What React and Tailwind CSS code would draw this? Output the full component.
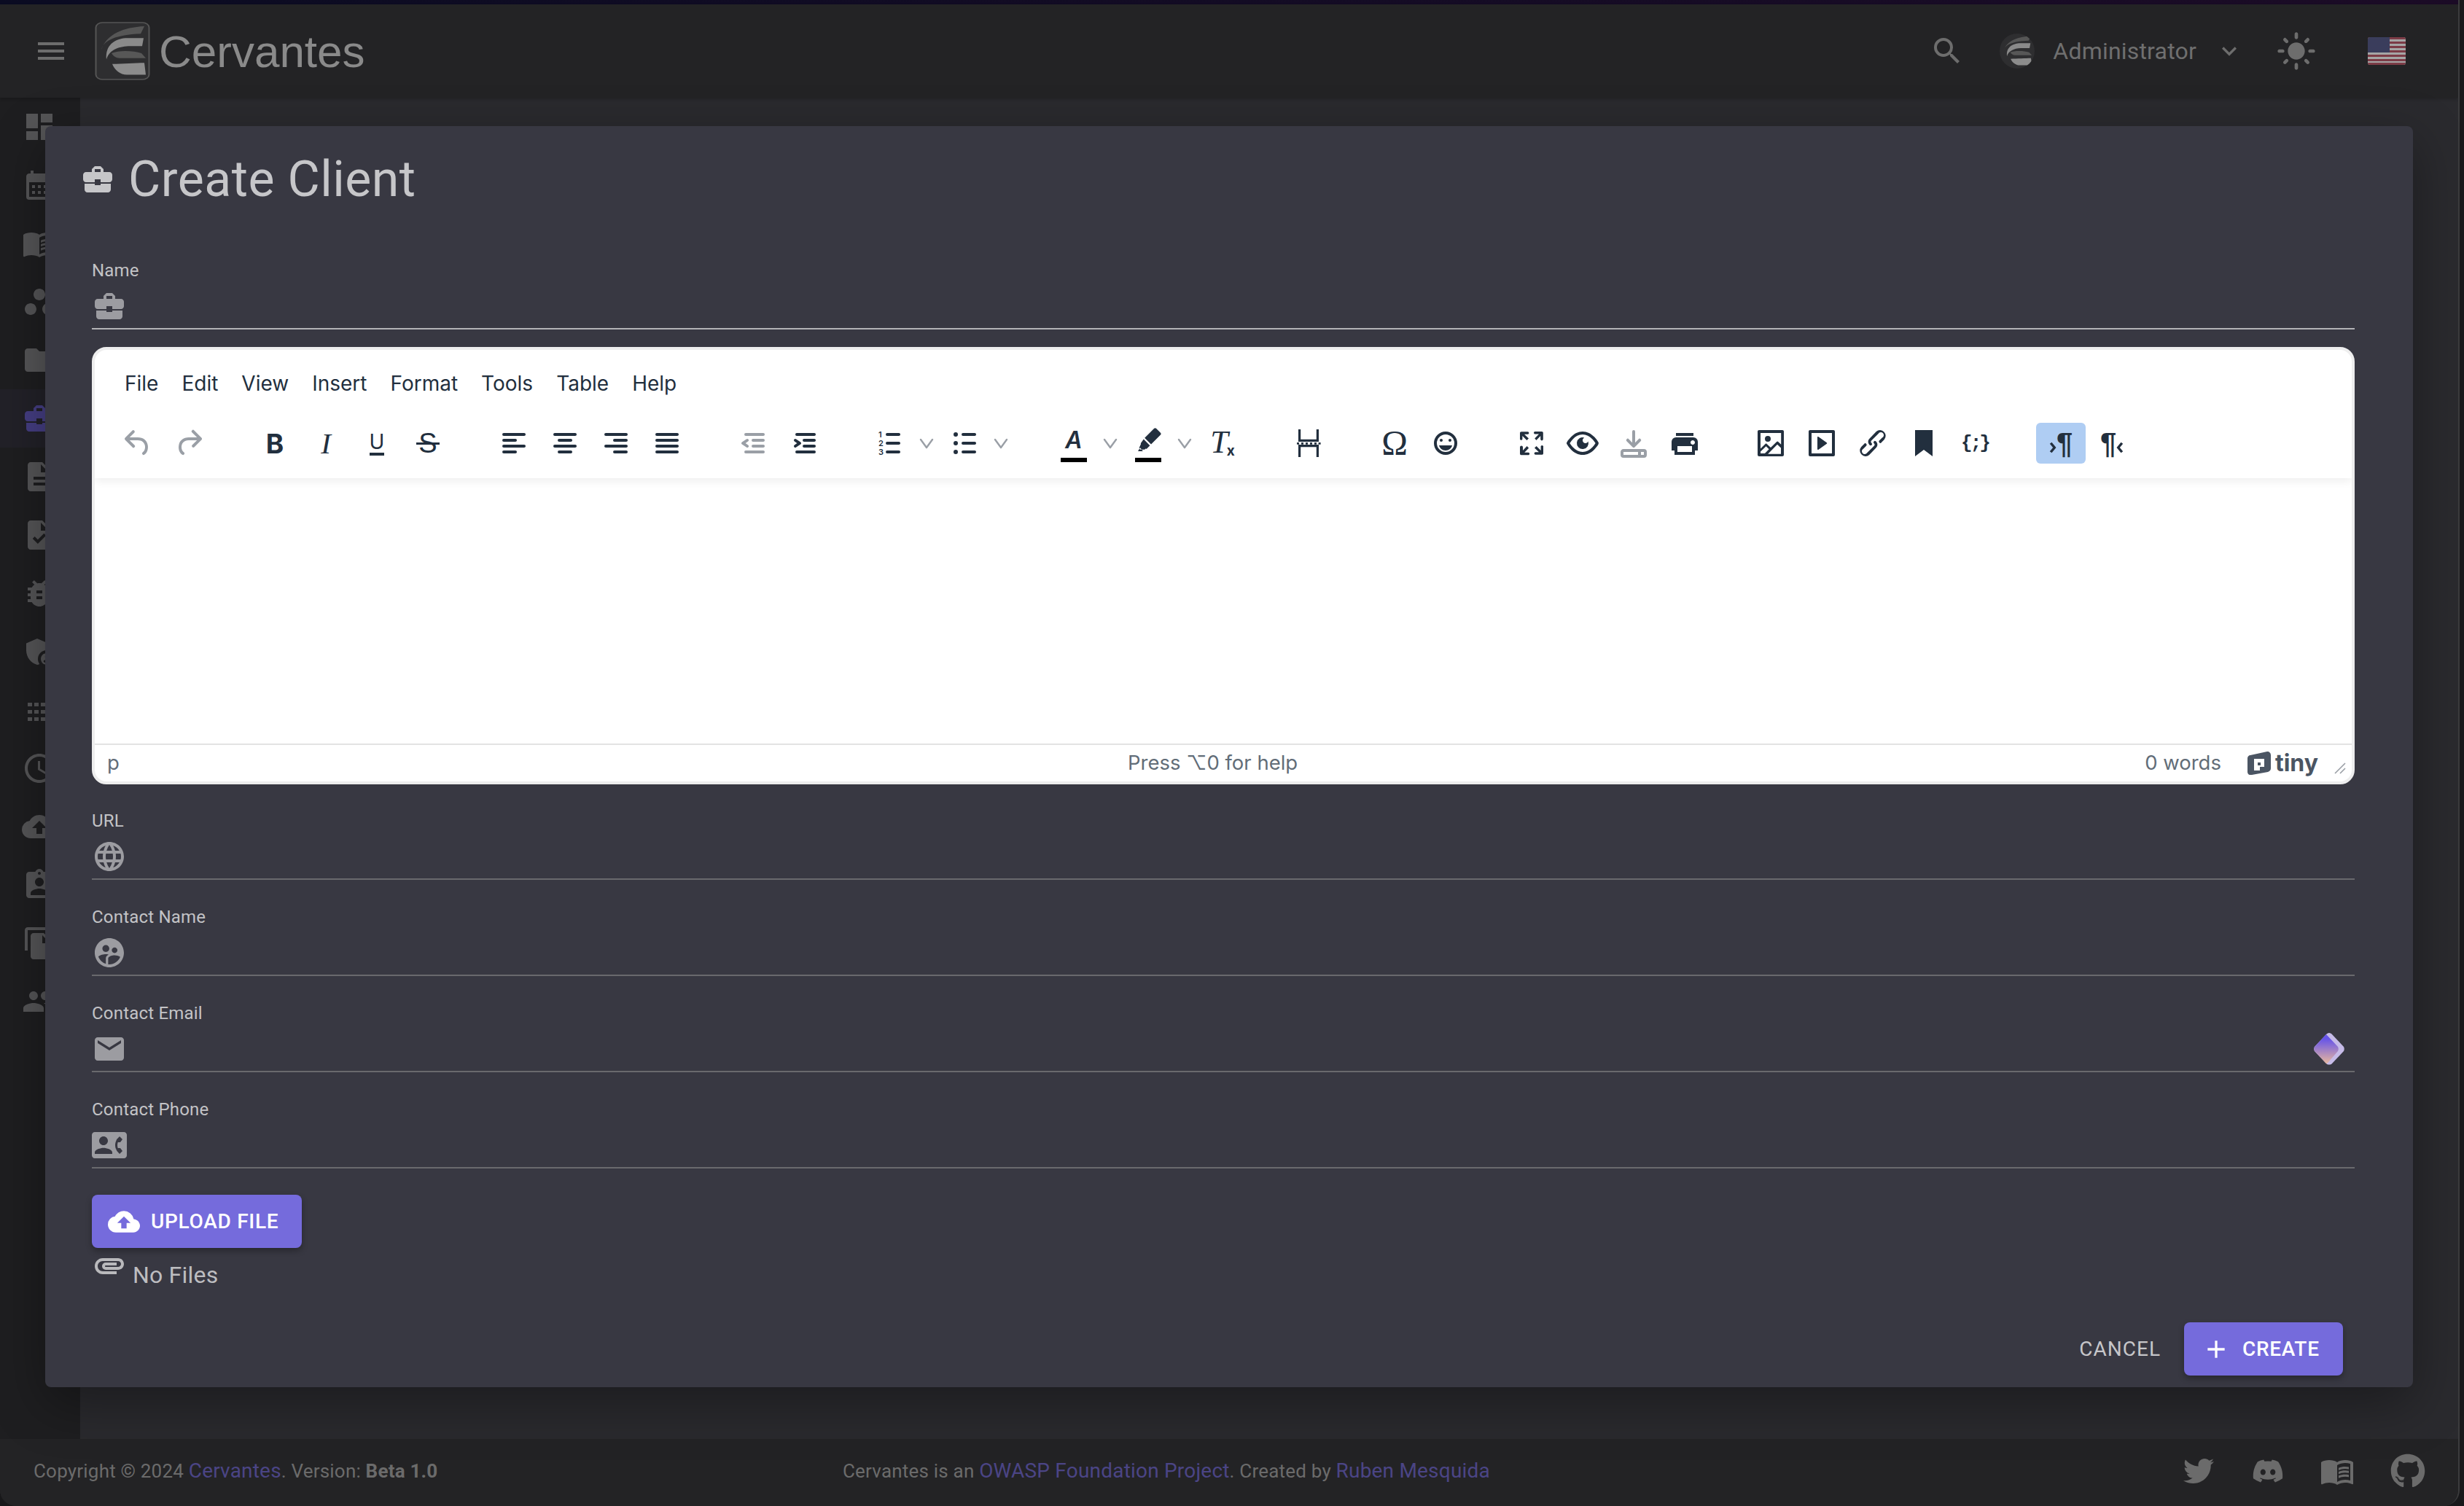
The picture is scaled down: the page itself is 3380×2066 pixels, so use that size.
import React from 'react';
import {
  MdMenu, MdDashboard, MdCalendarMonth, MdMenuBook, MdWorkspaces, MdFolder, MdBusinessCenter, MdDescription, MdTask,
  MdBugReport, MdAdminPanelSettings, MdAccessTime, MdCloudUpload, MdAssignmentInd, MdFileCopy, MdPeople, MdSearch, MdKeyboardArrowDown,
  MdLightMode, MdLanguage, MdSupervisedUserCircle, MdEmail, MdContactPhone, MdAttachment, MdAdd,
} from 'react-icons/md';
import { FaTwitter, FaDiscord, FaGithub } from 'react-icons/fa';

const ROBOTO = "font-['Roboto',sans-serif]";
const INTER = "font-['Inter',sans-serif]";

// small grid glyph used in the sidebar, no exact match in the icon packs
const GridIcon = ({ className }) => (
  <svg viewBox="0 0 24 24" className={className} fill="currentColor">
    {[7, 12, 17].map((y) =>
      [4, 8.5, 13, 17.5].map((x) => <rect key={`${x}-${y}`} x={x} y={y} width="3" height="2.5" />),
    )}
  </svg>
);

const CervantesMark = ({ className, framed }) => (
  <svg viewBox="0 0 76 108" preserveAspectRatio="none" className={className}>
    {framed && <rect x="1.5" y="1.5" width="73" height="105" rx="9" fill="#2e2e30" stroke="#555" strokeWidth="2" />}
    <path d="M68 8C40 10 16 22 9 52c3-18 20-28 54-30z" fill="#565656" />
    <path d="M67 30H42C28 32 14 42 16 70c3-17 16-24 30-25h19z" fill="#8a8a8a" />
    <path d="M23 58c10-6 30-5 41 0l6 9H34c-5 0-9-4-11-9z" fill="#575757" />
    <path d="M24 78c14 0 32-2 44-2l2 22H44c-9 0-17-9-20-20z" fill="#8c8c8c" />
  </svg>
);

const UsFlag = () => (
  <svg viewBox="0 0 52 38" className="w-[52px] h-[38px] rounded-[3px]">
    <rect width="52" height="38" fill="#a5a5a5" />
    {[0, 6, 12, 18, 24, 30, 35].map((y) => (
      <rect key={y} y={y} width="52" height="3" fill="#7c3b46" />
    ))}
    <rect width="30" height="21" fill="#3a3d5c" />
  </svg>
);

const sideItems = [
  MdDashboard, MdCalendarMonth, MdMenuBook, MdWorkspaces, MdFolder, MdBusinessCenter, MdDescription, MdTask,
  MdBugReport, MdAdminPanelSettings, GridIcon, MdAccessTime, MdCloudUpload, MdAssignmentInd, MdFileCopy, MdPeople,
];

// toolbar glyphs, 24 unit box like the editor's own icon set
const paths = {
  undo: 'M6.4 8H12c3.7 0 6.2 2 6.8 5.1.6 2.7-.4 5.6-2.3 6.8a1 1 0 0 1-1-1.8c1.1-.6 1.8-2.7 1.4-4.6-.5-2.1-2.1-3.5-4.9-3.5H6.4l3.3 3.3a1 1 0 1 1-1.4 1.4l-5-5a1 1 0 0 1 0-1.4l5-5a1 1 0 0 1 1.4 1.4L6.4 8Z',
  redo: 'M17.6 10H12c-2.8 0-4.4 1.4-4.9 3.5-.4 2 .3 4 1.4 4.6a1 1 0 1 1-1 1.8c-2-1.2-2.9-4.1-2.3-6.8.6-3 3-5.1 6.8-5.1h5.6l-3.3-3.3a1 1 0 1 1 1.4-1.4l5 5a1 1 0 0 1 0 1.4l-5 5a1 1 0 0 1-1.4-1.4l3.3-3.3Z',
  left: 'M5 5h14c.6 0 1 .4 1 1s-.4 1-1 1H5a1 1 0 1 1 0-2Zm0 4h8c.6 0 1 .4 1 1s-.4 1-1 1H5a1 1 0 1 1 0-2Zm0 8h8c.6 0 1 .4 1 1s-.4 1-1 1H5a1 1 0 0 1 0-2Zm0-4h14c.6 0 1 .4 1 1s-.4 1-1 1H5a1 1 0 0 1 0-2Z',
  center: 'M5 5h14c.6 0 1 .4 1 1s-.4 1-1 1H5a1 1 0 1 1 0-2Zm3 4h8c.6 0 1 .4 1 1s-.4 1-1 1H8a1 1 0 1 1 0-2Zm0 8h8c.6 0 1 .4 1 1s-.4 1-1 1H8a1 1 0 0 1 0-2Zm-3-4h14c.6 0 1 .4 1 1s-.4 1-1 1H5a1 1 0 0 1 0-2Z',
  right: 'M5 5h14c.6 0 1 .4 1 1s-.4 1-1 1H5a1 1 0 1 1 0-2Zm6 4h8c.6 0 1 .4 1 1s-.4 1-1 1h-8a1 1 0 0 1 0-2Zm0 8h8c.6 0 1 .4 1 1s-.4 1-1 1h-8a1 1 0 0 1 0-2Zm-6-4h14c.6 0 1 .4 1 1s-.4 1-1 1H5a1 1 0 0 1 0-2Z',
  justify: 'M5 5h14c.6 0 1 .4 1 1s-.4 1-1 1H5a1 1 0 1 1 0-2Zm0 4h14c.6 0 1 .4 1 1s-.4 1-1 1H5a1 1 0 1 1 0-2Zm0 4h14c.6 0 1 .4 1 1s-.4 1-1 1H5a1 1 0 0 1 0-2Zm0 4h14c.6 0 1 .4 1 1s-.4 1-1 1H5a1 1 0 0 1 0-2Z',
  outdent: 'M7 5h12c.6 0 1 .4 1 1s-.4 1-1 1H7a1 1 0 1 1 0-2Zm5 4h7c.6 0 1 .4 1 1s-.4 1-1 1h-7a1 1 0 0 1 0-2Zm0 4h7c.6 0 1 .4 1 1s-.4 1-1 1h-7a1 1 0 0 1 0-2Zm-5 4h12a1 1 0 0 1 0 2H7a1 1 0 0 1 0-2Zm1.6-3.8a1 1 0 0 1-1.2 1.6l-3-2a1 1 0 0 1 0-1.6l3-2a1 1 0 0 1 1.2 1.6L6.8 12l1.8 1.2Z',
  indent: 'M7 5h12c.6 0 1 .4 1 1s-.4 1-1 1H7a1 1 0 1 1 0-2Zm5 4h7c.6 0 1 .4 1 1s-.4 1-1 1h-7a1 1 0 0 1 0-2Zm0 4h7c.6 0 1 .4 1 1s-.4 1-1 1h-7a1 1 0 0 1 0-2Zm-5 4h12a1 1 0 0 1 0 2H7a1 1 0 0 1 0-2Zm-1.6-3.8a1 1 0 0 0 1.2 1.6l3-2a1 1 0 0 0 0-1.6l-3-2a1 1 0 0 0-1.2 1.6L7.2 12l-1.8 1.2Z',
  numlist: 'M10 17h8c.6 0 1 .4 1 1s-.4 1-1 1h-8a1 1 0 0 1 0-2Zm0-6h8c.6 0 1 .4 1 1s-.4 1-1 1h-8a1 1 0 0 1 0-2Zm0-6h8c.6 0 1 .4 1 1s-.4 1-1 1h-8a1 1 0 1 1 0-2Z',
  bullist: 'M11 5h8c.6 0 1 .4 1 1s-.4 1-1 1h-8a1 1 0 0 1 0-2Zm0 6h8c.6 0 1 .4 1 1s-.4 1-1 1h-8a1 1 0 0 1 0-2Zm0 6h8c.6 0 1 .4 1 1s-.4 1-1 1h-8a1 1 0 0 1 0-2ZM4.5 6a1.5 1.5 0 1 1 3 0 1.5 1.5 0 0 1-3 0Zm0 6a1.5 1.5 0 1 1 3 0 1.5 1.5 0 0 1-3 0Zm0 6a1.5 1.5 0 1 1 3 0 1.5 1.5 0 0 1-3 0Z',
  highlight: 'M17.5 3.4l3 3c.4.4.4 1 0 1.4L14 14.3l-4.4-4.4 6.5-6.5c.4-.4 1-.4 1.4 0ZM8.9 10.8l4.3 4.3-2 2c-.3.3-.7.3-1 .2l-.6.6H6.5l-.7-1.2 1.2-2.6c-.2-.3 0-.7.2-1l1.7-2.3ZM6.5 16.5 5 19h3.4l-1.9-2.5Z',
  pagebreak: 'M5 2.5h1.6V9.4h10.8V2.5H19v8.5H5V2.5Zm0 19h1.6V14.6h10.8v6.9H19V13H5v8.5ZM4 11.5h1.5v1.4H4Zm3 0h1.5v1.4H7Zm3 0h1.5v1.4H10Zm3 0h1.5v1.4H13Zm3 0h1.5v1.4H16Zm2.8 0h1.5v1.4h-1.5Z',
  emoji: 'M9 11c.6 0 1-.4 1-1s-.4-1-1-1-1 .4-1 1 .4 1 1 1Zm6 0c.6 0 1-.4 1-1s-.4-1-1-1-1 .4-1 1 .4 1 1 1Zm-3 6c2.3 0 4-1.5 4.5-3.5h-9C8 15.5 9.7 17 12 17Zm0-13a8 8 0 1 0 0 16 8 8 0 0 0 0-16Zm0 14a6 6 0 1 1 0-12 6 6 0 0 1 0 12Z',
  fullscreen: 'M15.3 10l-1.2-1.3 2.9-3h-2.3a.9.9 0 1 1 0-1.7H19c.5 0 .9.4.9.9v4.4a.9.9 0 1 1-1.8 0V7l-2.9 3Zm0 4l3 3v-2.3a.9.9 0 1 1 1.7 0V19c0 .5-.4.9-.9.9h-4.4a.9.9 0 1 1 0-1.8H17l-3-2.9 1.3-1.2ZM10 15.4l-2.9 3h2.3a.9.9 0 1 1 0 1.7H5a.9.9 0 0 1-1-.9v-4.4a.9.9 0 1 1 2 0V17l2.8-3 1.2 1.2ZM8.7 10L5.7 7v2.3a.9.9 0 0 1-1.7 0V5c0-.5.4-.9.9-.9h4.4a.9.9 0 0 1 0 1.8H7l3 2.9-1.3 1.2Z',
  preview: 'M3.5 12.5c.5.8 1.1 1.6 1.8 2.3 2 2 4.2 3.2 6.7 3.2s4.7-1.2 6.7-3.2a16.2 16.2 0 0 0 2.1-2.8 15.7 15.7 0 0 0-2.1-2.8c-2-2-4.2-3.2-6.7-3.2a9.3 9.3 0 0 0-6.7 3.2A16.2 16.2 0 0 0 3.2 12c0 .2.2.3.3.5Zm-2.4-1l.7-1.2L4 7.8C6.2 5.4 8.9 4 12 4c3 0 5.8 1.4 8.1 3.8a18.2 18.2 0 0 1 2.8 3.7v1l-.7 1.2-2.1 2.5c-2.3 2.4-5 3.8-8.1 3.8-3 0-5.8-1.4-8.1-3.8a18.2 18.2 0 0 1-2.8-3.7 1 1 0 0 1 0-1Zm12-3.3a2 2 0 1 0 2.7 2.6 4 4 0 1 1-2.6-2.6Z',
  save: 'M5 16h14a2 2 0 0 1 2 2v2a2 2 0 0 1-2 2H5a2 2 0 0 1-2-2v-2c0-1.1.9-2 2-2Zm0 2v2h14v-2H5Zm10 0h2v2h-2v-2Zm-4-6.4L8.7 9.3a1 1 0 1 0-1.4 1.4l4 4c.4.4 1 .4 1.4 0l4-4a1 1 0 1 0-1.4-1.4L13 11.6V4a1 1 0 0 0-2 0v7.6Z',
  print: 'M18 8H6a3 3 0 0 0-3 3v6h2v3h14v-3h2v-6a3 3 0 0 0-3-3Zm-1 10H7v-4h10v4Zm.5-5c-.8 0-1.5-.7-1.5-1.5s.7-1.5 1.5-1.5 1.5.7 1.5 1.5-.7 1.5-1.5 1.5Zm.5-8H6v2h12V5Z',
  image: 'M5 15.7l3.3-3.2c.3-.3.7-.3 1 0L12 15l4.1-4c.3-.4.8-.4 1 0l2 1.9V5H5v10.7ZM5 18.3V19h3l2.8-2.9-2-2L5 17.7Zm14-3l-2.5-2.4-6.4 6.5H19v-4ZM4 3h16c.6 0 1 .4 1 1v16c0 .6-.4 1-1 1H4a1 1 0 0 1-1-1V4c0-.6.4-1 1-1Zm6 8a2 2 0 1 0 0-4 2 2 0 0 0 0 4Z',
  media: 'M4 3h16c.6 0 1 .4 1 1v16c0 .6-.4 1-1 1H4a1 1 0 0 1-1-1V4c0-.6.4-1 1-1Zm1 2v14h14V5H5Zm4.8 2.6l5.6 4a.5.5 0 0 1 0 .8l-5.6 4A.5.5 0 0 1 9 16V8a.5.5 0 0 1 .8-.4Z',
  link: 'M6.2 12.3a1 1 0 0 1 1.4 1.4l-2 2a2 2 0 1 0 2.6 2.8l4.8-4.8a1 1 0 0 0 0-1.4 1 1 0 1 1 1.4-1.3 2.9 2.9 0 0 1 0 4L9.6 20a3.9 3.9 0 0 1-5.5-5.5l2-2Zm11.6-.6a1 1 0 0 1-1.4-1.4l2-2a2 2 0 1 0-2.6-2.8L11 10.3a1 1 0 0 0 0 1.4A1 1 0 1 1 9.6 13a2.9 2.9 0 0 1 0-4L14.4 4a3.9 3.9 0 0 1 5.5 5.5l-2 2Z',
  bookmark: 'M6 3h12v18l-6-4.5L6 21Z',
};

const Glyph = ({ name, className = '' }) => (
  <svg viewBox="0 0 24 24" className={`w-[48px] h-[48px] ${className}`} fill="currentColor" fillRule="evenodd">
    <path d={paths[name]} />
  </svg>
);

const Chevron = () => (
  <span className="w-[32px] flex justify-center text-[#9a9fa6]">
    <svg viewBox="0 0 20 20" className="w-[20px] h-[20px]" fill="none" stroke="currentColor" strokeWidth="2.4" strokeLinecap="round" strokeLinejoin="round">
      <path d="M2 5l8 11 8-11" />
    </svg>
  </span>
);

// little direction arrow next to the pilcrow
const DirArrow = ({ flip }) => (
  <svg viewBox="0 0 8 14" className={`w-[10px] h-[16px] mt-[12px] ${flip ? 'rotate-180' : ''}`} fill="none" stroke="currentColor" strokeWidth="3">
    <path d="M1.5 1.5 6 7l-4.5 5.5" />
  </svg>
);

const Btn = ({ children, active, faded, className = '' }) => (
  <div
    className={`w-[68px] h-[56px] mr-[2px] rounded-[6px] flex items-center justify-center relative shrink-0 ${
      active ? 'bg-[#afcdf3]' : ''
    } ${faded ? 'text-[#9a9fa6]' : 'text-[#222f3e]'} ${className}`}
  >
    {children}
  </div>
);

const Split = ({ children }) => (
  <div className="flex items-center shrink-0 w-[102px]">
    <div className="w-[68px] h-[56px] flex items-center justify-center relative text-[#222f3e]">{children}</div>
    <Chevron />
  </div>
);

const Group = ({ children }) => <div className="flex items-center mr-[48px] shrink-0">{children}</div>;

const Toolbar = () => (
  <div className="flex items-center pl-[25px] h-[56px]">
    <Group>
      <Btn faded><Glyph name="undo" /></Btn>
      <Btn faded><Glyph name="redo" /></Btn>
    </Group>
    <Group>
      <Btn><span className="font-['Inter',sans-serif] font-bold text-[37px] leading-none">B</span></Btn>
      <Btn><span className="font-['Liberation_Serif',serif] italic text-[41px] leading-none">I</span></Btn>
      <Btn>
        <span className="font-['Inter',sans-serif] text-[28px] leading-none border-b-[4px] border-[#222f3e] pb-[1px]">U</span>
      </Btn>
      <Btn>
        <span className="font-['Liberation_Sans',sans-serif] text-[38px] leading-none">S</span>
        <span className="absolute left-[18px] top-[27px] w-[32px] h-[3px] bg-[#222f3e]" />
      </Btn>
    </Group>
    <Group>
      <Btn><Glyph name="left" /></Btn>
      <Btn><Glyph name="center" /></Btn>
      <Btn><Glyph name="right" /></Btn>
      <Btn><Glyph name="justify" /></Btn>
    </Group>
    <Group>
      <Btn faded><Glyph name="outdent" /></Btn>
      <Btn><Glyph name="indent" /></Btn>
    </Group>
    <Group>
      <Split>
        <Glyph name="numlist" />
        <span className="absolute left-[18px] top-[10px] flex flex-col font-['Inter',sans-serif] font-semibold text-[11px] leading-[12px]">
          <span>1</span>
          <span>2</span>
          <span>3</span>
        </span>
      </Split>
      <Split><Glyph name="bullist" /></Split>
    </Group>
    <Group>
      <Split>
        <span className="font-['Inter',sans-serif] italic font-semibold text-[32px] leading-none mb-[8px]">A</span>
        <span className="absolute left-[16px] bottom-[2px] w-[36px] h-[6px] bg-black" />
      </Split>
      <Split>
        <Glyph name="highlight" className="mb-[6px]" />
        <span className="absolute left-[16px] bottom-[2px] w-[36px] h-[6px] bg-black" />
      </Split>
      <Btn>
        <span className="font-['Liberation_Serif',serif] italic text-[44px] leading-none -mt-[2px]">T</span>
        <span className="font-['Inter',sans-serif] font-bold text-[19px] leading-none mt-[20px] -ml-[2px]">x</span>
      </Btn>
    </Group>
    <Group>
      <Btn><Glyph name="pagebreak" /></Btn>
    </Group>
    <Group>
      <Btn><span className="font-['Liberation_Serif',serif] text-[48px] leading-none">Ω</span></Btn>
      <Btn><Glyph name="emoji" /></Btn>
    </Group>
    <Group>
      <Btn><Glyph name="fullscreen" /></Btn>
      <Btn><Glyph name="preview" /></Btn>
      <Btn faded><Glyph name="save" /></Btn>
      <Btn><Glyph name="print" /></Btn>
    </Group>
    <Group>
      <Btn><Glyph name="image" /></Btn>
      <Btn><Glyph name="media" /></Btn>
      <Btn><Glyph name="link" /></Btn>
      <Btn><Glyph name="bookmark" /></Btn>
      <Btn><span className="font-['Liberation_Mono',monospace] font-bold text-[26px] tracking-[-3px] leading-none">{'{;}'}</span></Btn>
    </Group>
    <Group>
      <Btn active>
        <DirArrow />
        <span className="font-['Liberation_Sans',sans-serif] font-bold text-[40px] leading-none">¶</span>
      </Btn>
      <Btn>
        <span className="font-['Liberation_Sans',sans-serif] font-bold text-[40px] leading-none">¶</span>
        <DirArrow flip />
      </Btn>
    </Group>
  </div>
);

const Editor = () => (
  <div className={`h-[600px] bg-white border-[4px] border-[#eeeeee] rounded-[20px] flex flex-col overflow-hidden ${INTER} text-[#222f3e]`}>
    <div className="h-[176px] shrink-0 pt-[28px] shadow-[0_4px_12px_rgba(0,0,0,0.07)] relative">
      <div className="flex pl-[25px] text-[28px] leading-[36px] h-[36px]">
        {['File', 'Edit', 'View', 'Insert', 'Format', 'Tools', 'Table', 'Help'].map((m) => (
          <span key={m} className="px-[16px]">{m}</span>
        ))}
      </div>
      <div className="mt-[36px]">
        <Toolbar />
      </div>
    </div>
    <div className="flex-1" />
    <div className="h-[52px] shrink-0 border-t-[2px] border-[#e3e3e3] flex items-center text-[27.5px] text-[#626d78] relative">
      <span className="ml-[17px] w-[20px]">p</span>
      <span className="absolute left-[1417px]">Press ⌥0 for help</span>
      <span className="ml-auto">0 words</span>
      <div className="ml-[36px] flex items-center gap-[6px] text-[#4b5563]">
        <svg viewBox="0 0 32 32" className="w-[32px] h-[32px]">
          <path d="M4 5 27 0c3 0 5 2 5 5v18c0 3-2 4-4 5L6 32c-3 1-6-1-6-4V9c0-2 2-4 4-4Z" fill="#4b5563" />
          <path d="M9 10h14v11h-6v5H9Z" fill="#fff" />
          <path d="M14 15h4v4h-4Z" fill="#4b5563" />
        </svg>
        <span className="font-bold text-[32px] leading-none">tiny</span>
      </div>
      <svg viewBox="0 0 16 16" className="w-[16px] h-[16px] ml-[22px] mr-[8px] mt-[14px]" fill="none" stroke="#9a9fa6" strokeWidth="1.6">
        <path d="M1 15 15 1M8 15l7-7" />
      </svg>
    </div>
  </div>
);

const Field = ({ label, icon: Icon, bright, trailing }) => (
  <div className={`h-[107px] border-b-[2px] pt-[12px] ${bright ? 'border-[#b3b3b6]' : 'border-[#69696d]'}`}>
    <div className="text-[24px] leading-[28px] tracking-[0.2px] text-[#c3c3c6]">{label}</div>
    <div className="flex items-center justify-between mt-[11px] h-[48px]">
      <Icon className="w-[48px] h-[48px] text-[#9c9ca1]" />
      {trailing}
    </div>
  </div>
);

const Diamond = () => (
  <svg viewBox="0 0 42 44" className="w-[42px] h-[44px] mr-[14px]">
    <defs>
      <linearGradient id="gem" x1="0" y1="0" x2="0" y2="1">
        <stop offset="0.15" stopColor="#6654e8" />
        <stop offset="1" stopColor="#e8b79e" />
      </linearGradient>
    </defs>
    <path d="M21 0c2 0 3 1 4 2l16 17c1 2 1 4 0 6L25 42c-2 2-6 2-8 0L1 25c-1-2-1-4 0-6L17 2c1-1 2-2 4-2Z" fill="#c6bbe8" />
    <path d="M17 2 33 19c1 2 1 4 0 6L20 40c-1 1-2 2-3 2L1 25c-1-2-1-4 0-6L17 2Z" fill="url(#gem)" />
  </svg>
);

export default function App() {
  return (
    <div className={`relative w-[3380px] h-[2066px] overflow-hidden bg-[#18181a] ${ROBOTO}`}>
      <div className="absolute inset-0 right-[6px] rounded-b-[22px] overflow-hidden flex flex-col bg-[#232325] border-r-[2px] border-[#3c3c3e]">
        <div className="h-[6px] shrink-0 bg-gradient-to-r from-[#0a0b22] to-[#1b0b26]" />

        <header className="h-[128px] shrink-0 flex items-center bg-[#232325] pl-[46px] shadow-[0_2px_4px_rgba(0,0,0,0.2)] relative">
          <MdMenu className="w-[48px] h-[48px] text-[#6d6d6d]" />
          <CervantesMark framed className="ml-[36px] w-[76px] h-[80px]" />
          <span className="ml-[12px] font-['Liberation_Sans',sans-serif] text-[62px] leading-none text-[#8a8a8a] mt-[2px]">Cervantes</span>
          <div className="ml-auto flex items-center">
            <MdSearch className="w-[48px] h-[48px] text-[#6d6d6d]" />
            <CervantesMark className="ml-[48px] w-[48px] h-[48px] rounded-full bg-[#2e2e30]" />
            <span className="ml-[25px] text-[32px] leading-none tracking-[0.2px] text-[#6f6f6f]">Administrator</span>
            <MdKeyboardArrowDown className="ml-[25px] w-[40px] h-[40px] text-[#6d6d6d]" />
            <MdLightMode className="ml-[44px] w-[56px] h-[56px] text-[#6d6d6d]" />
            <div className="ml-[70px] mr-[72px]"><UsFlag /></div>
          </div>
        </header>

        <div className="flex-1 flex min-h-0">
          <aside className="w-[110px] shrink-0 bg-[#1e1e20]">
            {sideItems.map((Icon, i) => (
              <div key={i} className={`h-[80px] flex items-center pl-[30px] ${i === 5 ? 'bg-[#222128]' : ''}`}>
                <Icon className={`w-[48px] h-[48px] ${i === 5 ? 'text-[#453e83]' : 'text-[#555557]'}`} />
              </div>
            ))}
          </aside>
          <main className="flex-1 bg-[#2a2a2e]" />
        </div>

        <footer className="h-[92px] shrink-0 bg-[#232325] flex items-center pl-[46px] pr-[45px] pb-[4px] text-[26px] tracking-[0.2px] text-[#6b6b6b] relative">
          <span>
            Copyright © 2024 <span className="text-[28px] text-[#4b4585]">Cervantes</span>. Version: <b className="font-bold">Beta 1.0</b>
          </span>
          <span className="absolute left-[1156px]">
            Cervantes is an <span className="text-[28px] text-[#4b4585]">OWASP Foundation Project</span>. Created by{' '}
            <span className="text-[28px] text-[#4b4585]">Ruben Mesquida</span>
          </span>
          <div className="ml-auto flex items-center gap-[49px] text-[#6b6b6b]">
            <FaTwitter className="w-[42px] h-[42px] mr-[3px]" />
            <FaDiscord className="w-[44px] h-[44px]" />
            <MdMenuBook className="w-[48px] h-[48px]" />
            <FaGithub className="w-[48px] h-[48px]" />
          </div>
        </footer>
      </div>

      {/* modal sits over the dimmed page */}
      <div className="absolute left-[62px] top-[173px] w-[3248px] h-[1730px] bg-[#383842] rounded-[8px] shadow-[0_22px_70px_rgba(0,0,0,0.35)] pl-[64px] pr-[80px] flex flex-col">
        <div className="flex items-center h-[146px] mb-[26px] shrink-0">
          <MdBusinessCenter className="-ml-[16px] w-[48px] h-[48px] text-[#c6c6c9]" />
          <span className="ml-[18px] text-[68px] leading-none tracking-[0.5px] text-[#c6c6c9]">Create Client</span>
        </div>
        <Field label="Name" icon={MdBusinessCenter} bright />
        <div className="mt-[24px]">
          <Editor />
        </div>
        <div className="mt-[24px] flex flex-col gap-[25px]">
          <Field label="URL" icon={MdLanguage} />
          <Field label="Contact Name" icon={MdSupervisedUserCircle} />
          <Field label="Contact Email" icon={MdEmail} trailing={<Diamond />} />
          <Field label="Contact Phone" icon={MdContactPhone} />
        </div>
        <button className="mt-[36px] w-[288px] h-[73px] shrink-0 rounded-[8px] bg-[#756bdc] text-white text-[28px] font-medium tracking-[0.7px] flex items-center pl-[22px] gap-[15px] shadow-[0_4px_8px_rgba(0,0,0,0.3)]">
          <MdCloudUpload className="w-[44px] h-[44px]" />
          UPLOAD FILE
        </button>
        <div className="flex items-start">
          <MdAttachment className="w-[48px] h-[48px] text-[#b9b9bc]" />
          <span className="ml-[8px] mt-[17px] text-[32px] leading-[40px] tracking-[0.2px] text-[#bdbdc0]">No Files</span>
        </div>
        <div className="mt-auto mb-[16px] flex items-center justify-end pr-[16px]">
          <span className="text-[28px] tracking-[1px] text-[#c6c6c9] mr-[32px]">CANCEL</span>
          <button className="w-[218px] h-[73px] rounded-[8px] bg-[#756bdc] text-white text-[28px] font-medium tracking-[0.7px] flex items-center pl-[24px] gap-[16px] shadow-[0_4px_8px_rgba(0,0,0,0.3)]">
            <MdAdd className="w-[40px] h-[40px]" />
            CREATE
          </button>
        </div>
      </div>
    </div>
  );
}
